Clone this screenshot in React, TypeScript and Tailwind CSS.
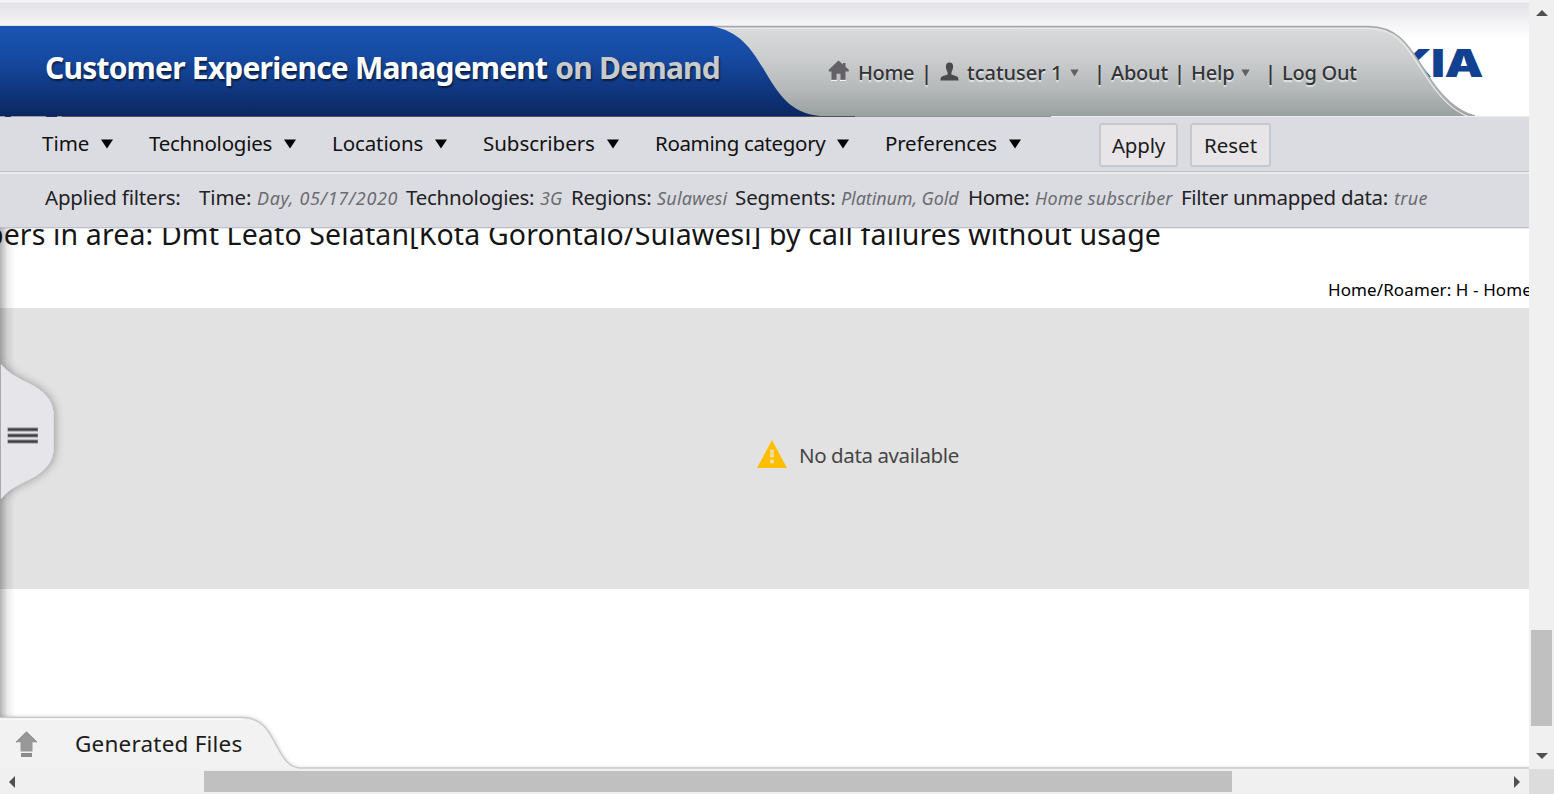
type Filter = { label: string; labelClass: string; value: string; valueClass: string };

const MENUS = [
  { text: "Time", box: "w-[107px]", label: "w-[59px] tracking-[0px]" },
  { text: "Technologies", box: "w-[183px]", label: "w-[135px] tracking-[-0.25px]" },
  { text: "Locations", box: "w-[151px]", label: "w-[103px] tracking-[-0.1px]" },
  { text: "Subscribers", box: "w-[172px]", label: "w-[124px] tracking-[-0.05px]" },
  { text: "Roaming category", box: "w-[230px]", label: "w-[182px] tracking-[-0.35px]" },
  { text: "Preferences", box: "w-[214px]", label: "w-[124px] tracking-[-0.2px]" },
];

const FILTERS: Filter[] = [
  { label: "Time:", labelClass: "w-[58px] tracking-[-0.1px]", value: "Day, 05/17/2020", valueClass: "w-[149px] tracking-[0.65px]" },
  { label: "Technologies:", labelClass: "w-[134px] tracking-[-0.25px]", value: "3G", valueClass: "w-[31px]" },
  { label: "Regions:", labelClass: "w-[86px] tracking-[-0.25px]", value: "Sulawesi", valueClass: "w-[78px] tracking-[0.2px]" },
  { label: "Segments:", labelClass: "w-[106px] tracking-[-0.1px]", value: "Platinum, Gold", valueClass: "w-[127px] tracking-[-0.1px]" },
  { label: "Home:", labelClass: "w-[67px] tracking-[-0.5px]", value: "Home subscriber", valueClass: "w-[146px] tracking-[0.2px]" },
  { label: "Filter unmapped data:", labelClass: "w-[213px] tracking-[-0.3px]", value: "true", valueClass: "w-[40px] tracking-[0.3px]" },
];

function Caret() {
  return (
    <svg width="12" height="11" viewBox="0 0 12 11" className="shrink-0">
      <path d="M0 0.5H12L6 9.5Z" fill="#000" />
    </svg>
  );
}

function SmallCaret() {
  return (
    <svg width="9" height="8" viewBox="0 0 9 8" className="shrink-0">
      <path d="M0.3 0.5H8.7L4.5 7.5Z" fill="#616164" />
    </svg>
  );
}

function HeaderArt() {
  return (
    <svg className="absolute inset-0" width="1529" height="117" viewBox="0 0 1529 117">
      <defs>
        <linearGradient id="blue" x1="0" y1="0" x2="0" y2="1">
          <stop offset="0" stopColor="#1a54b3" />
          <stop offset="0.35" stopColor="#164aa2" />
          <stop offset="0.7" stopColor="#103780" />
          <stop offset="1" stopColor="#0b2761" />
        </linearGradient>
        <linearGradient id="gray" x1="0" y1="0" x2="0" y2="1">
          <stop offset="0" stopColor="#dadbdb" />
          <stop offset="0.35" stopColor="#cccdce" />
          <stop offset="0.7" stopColor="#b5b9ba" />
          <stop offset="1" stopColor="#9a9fa0" />
        </linearGradient>
      </defs>
      <g className="font-['Inter'] text-[38px] font-black" fill="#124191">
        <text x="1394" y="76.5" textLength="38" lengthAdjust="spacingAndGlyphs">K</text>
        <text x="1431" y="76.5" textLength="14" lengthAdjust="spacingAndGlyphs">I</text>
        <text x="1444.5" y="76.5" textLength="39" lengthAdjust="spacingAndGlyphs">A</text>
      </g>
      <path d="M0 26.5H1368C1401 26.5 1411 50 1427 74C1441 96 1456 111 1475 116H0Z" fill="url(#gray)" />
      <path d="M0 28.5H1368C1399 28.5 1409 51 1425 75C1439 97 1453 112 1470 117" fill="none" stroke="#e9eaea" strokeWidth="1.2" />
      <path d="M0 26.5H1368C1401 26.5 1411 50 1427 74C1441 96 1456 111 1475 116" fill="none" stroke="#a5a7a8" strokeWidth="1.3" />
      <path d="M0 26H712C740 32 750 47 763 68C779 95 790 113 820 116H0Z" fill="url(#blue)" />
      <path d="M0 116.5H855" stroke="#525458" />
      <path d="M0 116.5H62" stroke="#9b9da6" />
      <path d="M5 116.5H11M46 116.5H57" stroke="#122f6c" />
      <path d="M855 116.5H1051" stroke="#8f9293" />
      <path d="M1051 116.5H1529" stroke="#ededf0" />
    </svg>
  );
}

function Header() {
  return (
    <header className="relative h-[117px] shrink-0 border-t border-[#f4f4f6] bg-[linear-gradient(to_bottom,#ffffff_0px,#e3e3e8_2px,#f5f5f7_24px,#ffffff_38px)]">
      <div className="absolute -top-px left-0">
        <div className="relative h-[117px] w-[1529px]">
          <HeaderArt />
        </div>
      </div>
      <div className="relative mt-[25px] flex h-[90px] items-center pl-[45px] whitespace-nowrap">
        <h1 className="-mt-[6px] w-[783px] text-[30px] leading-[40px] font-bold tracking-[-0.8px] text-white [text-shadow:1px_2px_2px_rgba(0,0,0,0.55)]">
          <span>Customer Experience Management</span>
          <span className="ml-[8px] tracking-[-0.75px] text-[#c9cacc]">on Demand</span>
        </h1>
        <nav className="mt-[3px] flex items-center text-[20px] leading-[28px] font-medium text-[#333436] [text-shadow:0_2px_1px_rgba(255,255,255,0.6)]">
          <svg width="30" height="21" viewBox="0 0 30 21" className="-mt-[5px] shrink-0">
            <path d="M10.5 0.5L0.8 9.8V11.5H3.5V19.8H8.5V13.8H12.5V19.8H17.5V11.5H20.8V9.8L17.5 6.8V3H15V4.6Z" fill="#636166" />
            <path d="M3 20.5H9M12 20.5H18" stroke="#f2f2f2" />
          </svg>
          <span className="w-[63px] tracking-[-0.4px]">Home</span>
          <span className="w-[19px] font-semibold">|</span>
          <svg width="27" height="20" viewBox="0 0 27 20" className="-mt-[2px] shrink-0">
            <path d="M9.5 0.5C12.2 0.5 13.3 2.3 13.1 5C13 7.5 11.8 9.5 11.4 10.6V12.5L16.5 14.2C18.2 14.9 18.5 16 18.5 18.5H0.5C0.5 16 0.8 14.9 2.5 14.2L7.6 12.5V10.6C7.2 9.5 6 7.5 5.9 5C5.7 2.3 6.8 0.5 9.5 0.5Z" fill="#4b4b4d" />
          </svg>
          <span className="w-[103px]">tcatuser 1</span>
          <SmallCaret />
          <span className="ml-[15px] w-[17px] font-semibold">|</span>
          <span className="w-[63px] tracking-[-0.2px]">About</span>
          <span className="w-[17px] font-semibold">|</span>
          <span className="w-[50px] tracking-[-0.2px]">Help</span>
          <SmallCaret />
          <span className="ml-[15px] w-[17px] font-semibold">|</span>
          <span className="tracking-[-0.25px]">Log Out</span>
        </nav>
      </div>
    </header>
  );
}

function FilterBar() {
  return (
    <div className="flex h-[54px] shrink-0 items-center bg-[#dbdce2] pl-[42px] text-[20.5px] leading-[28px] whitespace-nowrap text-[#111]">
      {MENUS.map((m) => (
        <div key={m.text} className={`${m.box} flex shrink-0 items-center`}>
          <span className={`${m.label} -mt-[2px]`}>{m.text}</span>
          <Caret />
        </div>
      ))}
      <button className="mt-[2px] h-[44px] w-[79px] rounded-[3px] border-2 border-[#c8c9ce] bg-[#e7e5e7] pb-px tracking-[-0.2px] text-[#1c1c1c]">Apply</button>
      <button className="mt-[2px] ml-[12px] h-[44px] w-[81px] rounded-[3px] border-2 border-[#c8c9ce] bg-[#e7e5e7] pb-px text-[#1c1c1c]">Reset</button>
    </div>
  );
}

function AppliedFilters() {
  return (
    <div className="flex h-[57px] shrink-0 items-center border-y border-[#c0c1c8] bg-[#dbdce2] pb-[5px] pl-[45px] text-[20.5px] whitespace-nowrap text-[#222] shadow-[inset_0_2px_0_#ebebec]">
      <span className="w-[154px] tracking-[-0.2px]">Applied filters:</span>
      {FILTERS.map((f) => (
        <span key={f.label} className="flex items-baseline">
          <span className={f.labelClass}>{f.label}</span>
          <span className={`${f.valueClass} text-[18px] text-[#6c6c6f] italic`}>{f.value}</span>
        </span>
      ))}
    </div>
  );
}

function DrawerHandle() {
  return (
    <svg className="absolute top-[112px] left-0" width="80" height="180" viewBox="0 340 80 180">
      <defs>
        <filter id="soft" x="-50%" y="-50%" width="200%" height="200%">
          <feDropShadow dx="1" dy="0" stdDeviation="5" floodColor="#000" floodOpacity="0.35" />
        </filter>
      </defs>
      <path
        d="M1 364C12 378 28 381 40 390C50 398 53.6 405 53.6 416V447C53.6 458 50 465 40 473C28 482 12 485 1 499Z"
        fill="#e6e5ea"
        filter="url(#soft)"
      />
      <path d="M0.5 364V499" stroke="#aaaaad" />
      <path d="M7.5 429.5H38M7.5 435.5H38M7.5 441.5H38" stroke="#8a8a8d" strokeWidth="4" />
      <path d="M8 429.5H37.5M8 435.5H37.5M8 441.5H37.5" stroke="#3e3e40" strokeWidth="2" />
    </svg>
  );
}

function FilesTab() {
  return (
    <div className="absolute bottom-0 left-0 h-[60px] w-full">
      <svg className="absolute inset-0" width="1529" height="60" viewBox="0 709 1529 60">
        <defs>
          <filter id="tabShadow" x="-5%" y="-30%" width="110%" height="160%">
            <feGaussianBlur stdDeviation="2.2" />
          </filter>
        </defs>
        <path d="M-20 717H243C279 717 275 768 301 768H1540V780H-20Z" fill="#000" opacity="0.2" filter="url(#tabShadow)" />
        <path d="M-2 717.5H243C278 717.5 274 768 301 768H1531V772H-2Z" fill="#f2f2f2" stroke="#cacaca" strokeWidth="1.4" />
        <path d="M0 719H243" stroke="#fff" />
      </svg>
      <div className="relative flex h-[60px] items-center pt-[10px] pl-[16px]">
        <svg width="22" height="27" viewBox="0 0 22 27" className="mt-px">
          <path d="M10.5 1L21 11.3H16.5V20.5H4.5V11.3H0Z" fill="#989898" />
          <path d="M10.5 1L21 11.3M10.5 1L0 11.3" stroke="#777" />
          <path d="M5 22H16V26H5Z" fill="#8b8b8b" />
        </svg>
        <span className="ml-[37px] text-[22.5px] leading-[30px] tracking-[0.2px] text-[#1c1c1c]">Generated Files</span>
      </div>
    </div>
  );
}

function Content() {
  return (
    <section className="relative flex min-h-0 flex-1 flex-col overflow-hidden bg-white">
      <div className="flex h-[80px] shrink-0 flex-col border-t border-[#e9e9ec] whitespace-nowrap text-black">
        <h2 className="-mt-[15px] flex h-[40px] w-[1161px] justify-end text-[28.5px] leading-[40px] tracking-[0.13px] text-[#151515]">
          bers in area: Dmt Leato Selatan[Kota Gorontalo/Sulawesi] by call failures without usage
        </h2>
        <p className="mt-[24px] pl-[1328px] text-[17px] leading-[24px] tracking-[0.1px]">Home/Roamer: H - Home</p>
      </div>
      <div className="flex h-[281px] shrink-0 items-center bg-[#e2e2e2] pt-[13px] pl-[757px]">
        <svg width="30" height="28" viewBox="0 0 30 28" className="-mt-[2px]">
          <path d="M15 0L30 28H0Z" fill="#ffbf00" />
          <path d="M14 10.5H16V16.5H14ZM14 20.5H16V22.5H14Z" fill="none" stroke="#e8e3cf" strokeWidth="1.4" />
        </svg>
        <span className="-mt-px ml-[12px] text-[20.5px] leading-[28px] tracking-[-0.4px] text-[#464646]">No data available</span>
      </div>
      <div className="absolute inset-y-0 left-0 w-[15px] bg-linear-to-r from-black/30 via-black/8 to-transparent" />
      <DrawerHandle />
      <FilesTab />
    </section>
  );
}

export default function App() {
  return (
    <div className="flex h-[794px] w-[1554px] overflow-hidden bg-[#f0f0f0] font-['Noto_Sans','Open_Sans',sans-serif]">
      <div className="flex w-[1529px] shrink-0 flex-col">
        <main className="flex h-[769px] flex-col overflow-hidden">
          <Header />
          <FilterBar />
          <AppliedFilters />
          <Content />
        </main>
        <div className="flex h-[25px] items-center pl-[9px]">
          <svg width="6" height="12" viewBox="0 0 6 12">
            <path d="M6 0V12L0 6Z" fill="#505050" />
          </svg>
          <div className="ml-[189px] h-[21px] w-[1028px] bg-[#c0c0c0]" />
          <svg className="ml-[282px]" width="6" height="12" viewBox="0 0 6 12">
            <path d="M0 0V12L6 6Z" fill="#505050" />
          </svg>
        </div>
      </div>
      <div className="flex flex-1 flex-col items-center">
        <svg className="mt-[10px] shrink-0" width="12" height="6" viewBox="0 0 12 6">
          <path d="M0 6H12L6 0Z" fill="#505050" />
        </svg>
        <div className="mt-[614px] h-[96px] w-[21px] shrink-0 bg-[#c0c0c0]" />
        <svg className="mt-[27px] shrink-0" width="12" height="6" viewBox="0 0 12 6">
          <path d="M0 0H12L6 6Z" fill="#505050" />
        </svg>
        <div className="mt-[10px] w-full flex-1 bg-[#dcdcdc]" />
      </div>
    </div>
  );
}
